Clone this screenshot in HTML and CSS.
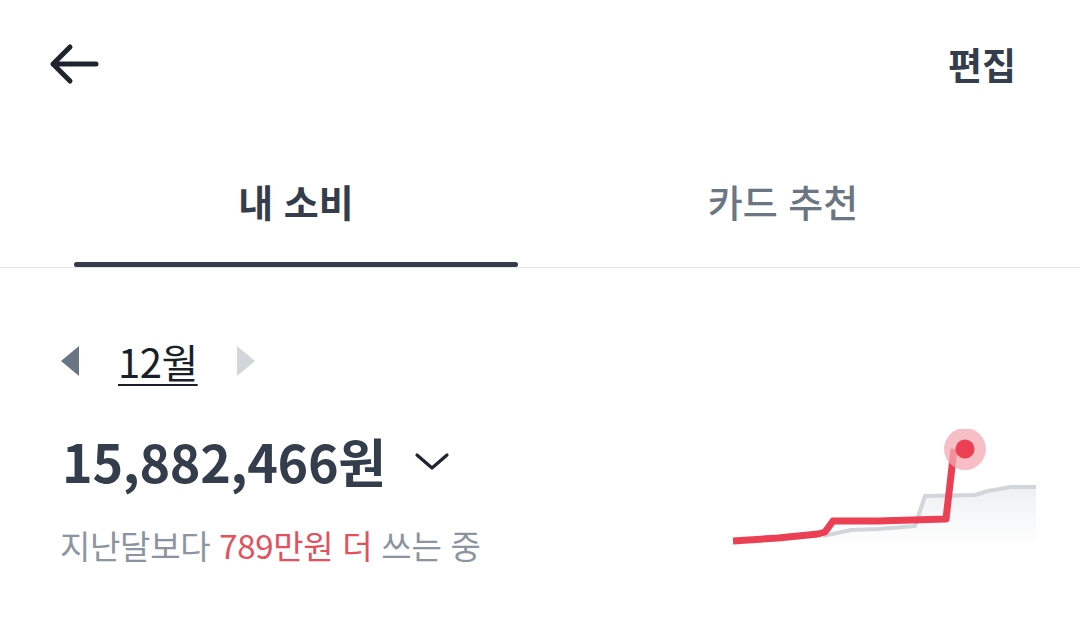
FILE: index.html
```html
<!DOCTYPE html>
<html lang="ko">
<head>
<meta charset="utf-8">
<link rel="stylesheet" href="styles.css">
</head>
<body>
<div class="app">
  <header class="topbar">
    <svg class="back" width="56" height="44" viewBox="0 0 56 44">
      <path d="M50 22 H7 M24 5 L7 22 L24 39" fill="none" stroke="#1f2530" stroke-width="5" stroke-linecap="round" stroke-linejoin="round"/>
    </svg>
    <span class="edit">편집</span>
  </header>

  <nav class="tabs">
    <div class="tab active">내 소비</div>
    <div class="tab second">카드 추천</div>
  </nav>

  <section class="summary">
    <div class="info">
      <div class="month-row">
        <span class="tri tri-left"></span>
        <span class="month">12월</span>
        <span class="tri tri-right"></span>
      </div>
      <div class="amount-row">
        <span class="amount">15,882,466원</span>
        <svg class="chev" width="36" height="20" viewBox="0 0 36 20">
          <path d="M3 3 L18 16 L33 3" fill="none" stroke="#1f2530" stroke-width="3.2" stroke-linecap="round" stroke-linejoin="round"/>
        </svg>
      </div>
      <div class="compare">지난달보다 <span class="red">789만원 더</span> 쓰는 중</div>
    </div>
    <svg class="chart" width="312" height="124" viewBox="0 0 312 124">
      <defs>
        <linearGradient id="fade" x1="0" y1="0" x2="0" y2="1">
          <stop offset="0" stop-color="#eef0f3"/>
          <stop offset="1" stop-color="#ffffff"/>
        </linearGradient>
      </defs>
      <path d="M95 107 L123 101 L150 100 L187 97 L197 67 L247 66 L260 62 L283 58 L308 58 L308 118 L95 118 Z" fill="url(#fade)"/>
      <path d="M95 107 L123 101 L150 100 L187 97 L197 67 L247 66 L260 62 L283 58 L308 58" fill="none" stroke="#d1d6db" stroke-width="4" stroke-linejoin="round"/>
      <path d="M5 112 L50 109 L90 105 L97 103 L105 92 L150 92 L218 90 L226 20" fill="none" stroke="#eb4053" stroke-width="7" stroke-linejoin="round"/>
      <circle cx="237" cy="20" r="21" fill="#f4a9b1" opacity="0.75"/>
      <circle cx="237" cy="20" r="9.5" fill="#eb4053"/>
    </svg>
  </section>
</div>
</body>
</html>
```

FILE: styles.css
```css
* { box-sizing: border-box; }
html, body { margin: 0; padding: 0; background: #ffffff; }
body {
  font-family: "Noto Sans CJK KR", "Noto Sans", sans-serif;
  color: #333d4b;
  width: 1080px;
  height: 642px;
  overflow: hidden;
}
.topbar {
  height: 128px;
  display: flex;
  align-items: center;
  justify-content: space-between;
  padding: 0 64px 0 46px;
}
.back { display: block; }
.edit {
  font-size: 37px;
  font-weight: 700;
  color: #333d4b;
  line-height: 1;
}
.tabs {
  display: flex;
  padding: 0 32px 0 74px;
  border-bottom: 1px solid #e5e8eb;
  height: 140px;
}
.tab {
  flex: 1;
  display: flex;
  justify-content: center;
  align-items: center;
  padding-top: 6px;
  font-size: 38px;
  font-weight: 500;
  color: #6b7684;
  position: relative;
  line-height: 1;
}
.tab.active {
  flex: 0 0 444px;
  font-weight: 700;
  color: #333d4b;
}
.tab.active::after {
  content: "";
  position: absolute;
  left: 0;
  right: 0;
  bottom: 0;
  height: 5px;
  border-radius: 3px;
  background: #333d4b;
}
.summary {
  display: flex;
  justify-content: space-between;
  align-items: flex-start;
  padding: 69px 40px 0 60px;
}
.info { display: flex; flex-direction: column; }
.month-row {
  display: flex;
  align-items: center;
  height: 48px;
}
.tri {
  width: 0; height: 0;
  border-top: 15px solid transparent;
  border-bottom: 15px solid transparent;
}
.tri-left { border-right: 18px solid #6b7684; margin-left: 1px; }
.tri-right { border-left: 18px solid #d1d6db; }
.month {
  margin: 0 39px 0 39px;
  font-size: 40px;
  line-height: 48px;
  font-weight: 400;
  color: #191f28;
  text-decoration: underline;
  text-decoration-thickness: 2px;
  text-underline-offset: 6px;
  letter-spacing: -0.5px;
}
.amount-row {
  display: flex;
  align-items: center;
  margin-top: 46px;
  height: 60px;
}
.amount {
  font-size: 52px;
  line-height: 60px;
  font-weight: 700;
  color: #333d4b;
  letter-spacing: -0.3px;
  margin-left: 2px;
}
.chev { margin-left: 28px; margin-top: 2px; }
.compare {
  margin-top: 34px;
  font-size: 33px;
  line-height: 40px;
  color: #8b95a1;
  letter-spacing: -0.3px;
}
.red { color: #e5505c; }
.chart { margin-top: 92px; display: block; }
```
